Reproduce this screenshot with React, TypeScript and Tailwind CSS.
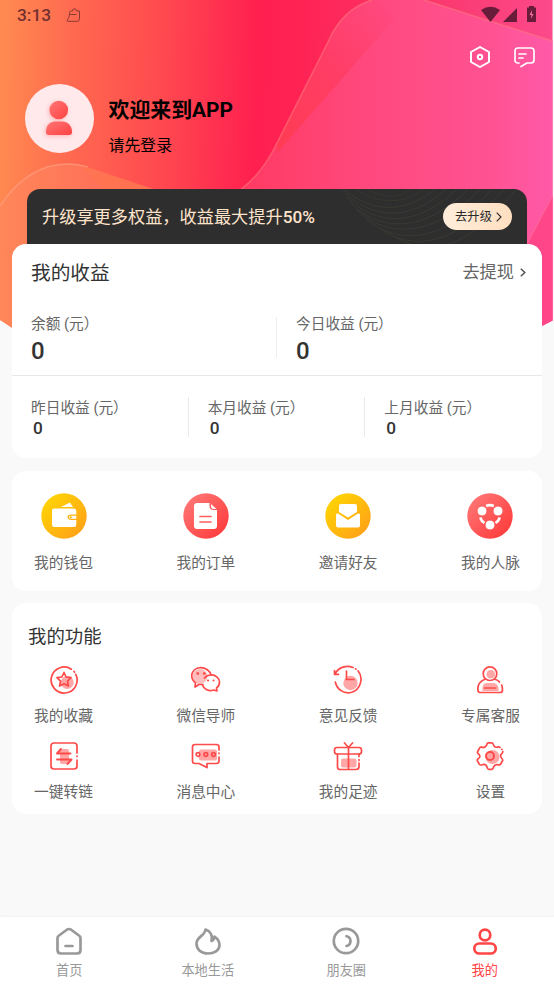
import React from "react";

const RED = "#ff4a4a";
const PINK = "#ffa6a6";

function Backdrop() {
  return (
    <svg className="absolute left-0 top-0 h-[340px] w-[553px]" viewBox="0 0 553 340" fill="none">
      <defs>
        <linearGradient id="base" x1="0" y1="130" x2="553" y2="145" gradientUnits="userSpaceOnUse">
          <stop offset="0" stopColor="#ff8a50" />
          <stop offset="0.12" stopColor="#ff6b50" />
          <stop offset="0.3" stopColor="#ff474f" />
          <stop offset="0.46" stopColor="#ff2050" />
          <stop offset="0.54" stopColor="#ff2354" />
          <stop offset="0.8" stopColor="#fa3a70" />
          <stop offset="1" stopColor="#fc4a8c" />
        </linearGradient>
        <linearGradient id="plate" x1="240" y1="0" x2="553" y2="0" gradientUnits="userSpaceOnUse">
          <stop offset="0" stopColor="#ff3a62" />
          <stop offset="0.45" stopColor="#ff4a80" />
          <stop offset="0.8" stopColor="#ff5292" />
          <stop offset="1" stopColor="#ff5aa8" />
        </linearGradient>
        <linearGradient id="facet" x1="270" y1="160" x2="385" y2="10" gradientUnits="userSpaceOnUse">
          <stop offset="0" stopColor="#ff3c50" />
          <stop offset="0.6" stopColor="#ff3c62" stopOpacity="0.8" />
          <stop offset="1" stopColor="#ff4274" stopOpacity="0.25" />
        </linearGradient>
        <linearGradient id="dune" x1="0" y1="0" x2="160" y2="0" gradientUnits="userSpaceOnUse">
          <stop offset="0" stopColor="#ff8759" />
          <stop offset="0.6" stopColor="#ff7259" />
          <stop offset="1" stopColor="#ff6354" />
        </linearGradient>
      </defs>
      <path d="M0 0H552.5V320.5Q276 470 0 320Z" fill="url(#base)" />
      <path d="M240 190Q262 174 277 143L328 42Q342 9 372 0H424L552.5 41V320.5L542 326H240Z" fill="url(#plate)" />
      <path d="M277 143L328 42Q342 9 372 0H376L395 18L277 153Z" fill="url(#facet)" />
      <path d="M240 190Q262 174 277 143L328 42Q342 9 372 0M424 0L552.5 41" stroke="#ff7a80" strokeOpacity="0.55" strokeWidth="1.5" />
      <path d="M552.5 196L524 250V335L552.5 320.5Z" fill="#ff4688" />
      <path d="M552.5 196L524 250" stroke="#ff7f9f" strokeOpacity="0.5" />
      <path d="M0 206Q28 164 68 164Q78 164 90 168L156 190V340H30L0 320Z" fill="url(#dune)" />
      <path d="M80 165.500L105 190H156L90 168Z" fill="#ff7450" fillOpacity="0.8" />
      <path d="M0 206Q28 164 68 164Q78 164 88 167" stroke="#ff9e80" strokeOpacity="0.75" strokeWidth="1.3" />
    </svg>
  );
}

function StatusBar() {
  return (
    <div className="flex h-[31px] items-center justify-between pl-[17px] pr-[17px] text-[#733030]">
      <div className="flex items-center">
        <span className="w-[34px] text-[17.3px] font-medium leading-[31px]">3:13</span>
        <svg className="ml-[15px]" width="15" height="15" viewBox="0 0 15 15" fill="none" stroke="#8b3a35" strokeWidth="1">
          <path d="M4.500 3H6.500Q6.500.8 8.500.8T10.500 3H13.500V10Q13.500 13.300 11.500 13.300H1.700Q.8 13.300 1.200 12.300Q3.500 9.500 3.500 6Q3.500 3 4.500 3ZM3.700 6.500H10.500" />
        </svg>
      </div>
      <svg className="-mt-[2px]" width="56" height="17" viewBox="0 0 56 17" fill="#681c3a">
        <path d="M0 4Q9.500-2.500 19 4L9.500 16Z" />
        <path d="M36 2V16H22Z" />
        <path d="M46 1.500H48V0H53V1.500H55V16H46Z" />
        <path d="M51 4L48.500 9H50.300L49.800 13L52.600 8H50.900Z" fill="#ed6995" />
      </svg>
    </div>
  );
}

function Header() {
  return (
    <header className="relative h-[189px]">
      <StatusBar />
      <div className="flex h-[52px] items-center justify-end gap-[24px] pr-[19px]">
        <svg width="20" height="22" viewBox="0 0 20 22" fill="none" stroke="white" strokeWidth="2" strokeLinejoin="round">
          <path d="M10 1L19 6V16L10 21L1 16V6Z" />
          <circle cx="10" cy="11" r="2.200" />
        </svg>
        <svg width="21" height="21" viewBox="0 0 21 21" fill="none" stroke="white" strokeWidth="1.700" strokeLinecap="round" strokeLinejoin="round">
          <path d="M5 16H4Q1 16 1 13V4Q1 1 4 1H17Q20 1 20 4V13Q20 16 17 16H13L7 19.500M5 7H12M5 11H9" />
        </svg>
      </div>
      <div className="flex items-start pl-[25px]">
        <div className="mt-[0.5px] flex h-[69px] w-[69px] items-center justify-center rounded-full bg-[#ffe9eb]">
          <svg className="-ml-[1.5px] -mt-[1px] drop-shadow-[-1px_1px_2px_#ffb3b3]" width="26" height="36" viewBox="0 0 26 36">
            <defs>
              <linearGradient id="person" x1="0" y1="0" x2="1" y2="1">
                <stop stopColor="#ff7676" /><stop offset="1" stopColor="#ff4141" />
              </linearGradient>
            </defs>
            <circle cx="12.800" cy="10" r="9.300" fill="url(#person)" />
            <path d="M0 32C0 24 5 21.500 10 21.500H16C22 21.500 26 26 26 32Q26 35 23 35H3Q0 35 0 32Z" fill="url(#person)" />
          </svg>
        </div>
        <div className="ml-[14.500px] text-black">
          <div className="mt-[12px] text-[20.900px] font-bold leading-[30px]">欢迎来到APP</div>
          <div className="mt-[9px] text-[15.900px] leading-[24px]">请先登录</div>
        </div>
      </div>
    </header>
  );
}

function UpgradeBanner() {
  return (
    <div className="relative mx-[27px] flex h-[54.500px] items-center overflow-hidden rounded-t-[13px] bg-[#2e2e2e] pl-[15px] pr-[15px]">
      <svg className="absolute left-[300px] top-0" width="200" height="55" viewBox="0 0 200 55" fill="none" stroke="#3c3b34" strokeWidth="0.900">
        <path d="M16 0C43 22 75 27 108 0M18 4C45 29 82 34 119 0M20 8C47 36 89 40 130 0M24 14C51 42 96 46 141 0M30 21C60 49 105 50 153 0M39 30C72 57 117 54 165 0M53 40C88 63 130 56 177 0M70 49C105 69 143 58 189 0" />
        <path d="M28 0C49 14 76 17 96 0M40 0C57 9 72 10 84 0" opacity="0.800" />
      </svg>
      <span className="relative mt-[2px] flex-1 text-[17.200px] font-normal leading-[24px] text-[#ffe4cc]">升级享更多权益，收益最大提升<span className="font-medium">50%</span></span>
      <button className="relative flex h-[27px] w-[69px] items-center justify-center gap-[4px] rounded-full bg-gradient-to-r from-[#ffedda] to-[#ffdfc1] pl-[2px] pt-px text-[12.300px] text-[#292929]">
        <span className="pt-px">去升级</span>
        <svg width="6" height="10" viewBox="0 0 6 10" fill="none" stroke="#292929" strokeWidth="1.100"><path d="M.7.7L5 5L.7 9.300" /></svg>
      </button>
    </div>
  );
}

function Earnings() {
  const small = ["昨日收益 (元）", "本月收益 (元）", "上月收益 (元）"];
  return (
    <section className="relative mx-[12px] h-[214.5px] rounded-[14px] bg-white text-[#333]">
      <div className="flex h-[58px] items-center justify-between pl-[19px] pr-[16px]">
        <h2 className="pt-[2px] text-[19.700px] font-normal">我的收益</h2>
        <div className="flex items-center gap-[6px] text-[17.200px] text-[#666]">
          <span className="pt-px">去提现</span>
          <svg width="6" height="9" viewBox="0 0 6 9" fill="none" stroke="#555" strokeWidth="1.500"><path d="M.8.7L4.800 4.500L.8 8.300" /></svg>
        </div>
      </div>
      <div className="flex h-[74.500px] border-b border-[#e8e8e8] pt-[11px]">
        {["余额 (元）", "今日收益 (元）"].map((label, i) => (
          <div key={label} className="relative flex-1 pl-[19px]">
            <div className="text-[14.700px] leading-[22px] text-[#666]">{label}</div>
            <div className="text-[24px] font-medium leading-[32px]">0</div>
            {i === 0 && <i className="absolute right-0 top-[4px] h-[41px] w-px bg-[#eee]" />}
          </div>
        ))}
      </div>
      <div className="flex pt-[21px]">
        {small.map((label, i) => (
          <div key={label} className="relative flex-1 pl-[19px]">
            <div className="text-[14.700px] leading-[22px] text-[#666]">{label}</div>
            <div className="-mt-px pl-[2px] text-[17.200px] font-medium leading-[20px]">0</div>
            {i < 2 && <i className="absolute right-0 top-0 h-[40px] w-px bg-[#eaeaea]" />}
          </div>
        ))}
      </div>
    </section>
  );
}

function Disc({ tone, children }: { tone: "gold" | "red"; children: React.ReactNode }) {
  const id = React.useId();
  return (
    <svg width="46" height="46" viewBox="0 0 46 46">
      <defs>
        <linearGradient id={id} x1="0" y1="0" x2="1" y2="1">
          <stop stopColor={tone === "gold" ? "#ffdb00" : "#ff7c7c"} />
          <stop offset="1" stopColor={tone === "gold" ? "#ff9b1b" : "#ff3535"} />
        </linearGradient>
      </defs>
      <circle cx="23" cy="23" r="22.700" fill={`url(#${id})`} />
      {children}
    </svg>
  );
}

const shortcuts = [
  {
    label: "我的钱包",
    icon: (
      <Disc tone="gold">
        <path d="M20 14L28 10Q29 9.500 29.600 10.500L32 14Z" fill="white" />
        <path d="M13 15.500H33Q35.300 15.500 35.300 18V21.500H30Q26.500 21.500 26.500 24T30 27H35.300V31.500Q35.300 34 33 34H13Q11 34 11 32V17.500Q11 15.500 13 15.500Z" fill="white" />
        <path d="M35.300 22.700H30Q28 22.700 28 24.200T30 25.800H35.300Z" fill="white" />
        <circle cx="29.900" cy="24.200" r="1" fill="#ffaf10" />
      </Disc>
    ),
  },
  {
    label: "我的订单",
    icon: (
      <Disc tone="red">
        <path d="M14 10H26.500V13Q26.500 17 30.500 17H34V33Q34 36 31 36H14Q11 36 11 33V13Q11 10 14 10Z" fill="white" />
        <path d="M28 11L33.500 16H30.500Q28 16 28 13Z" fill="white" />
        <path d="M17 23.500H28M17 29H28" stroke="#ff6060" strokeWidth="1.700" strokeLinecap="round" />
      </Disc>
    ),
  },
  {
    label: "邀请好友",
    icon: (
      <Disc tone="gold">
        <path d="M14 13Q14 11 16 11H30Q32 11 32 13V19L23 24.500L14 19Z" fill="white" />
        <path d="M13 20.500L23 27L33 20.500Q35 20 35 22V32.500Q35 34.500 33 34.500H13Q11 34.500 11 32.500V22Q11 20 13 20.500Z" fill="white" />
      </Disc>
    ),
  },
  {
    label: "我的人脉",
    icon: (
      <Disc tone="red">
        <path d="M19.200 13Q23 11.200 26.800 13M32.800 24.500Q31.700 28 28.500 30M17.500 30Q14.300 28 13.200 24.500" fill="none" stroke="white" strokeWidth="2.600" />
        <circle cx="15" cy="18" r="5" fill="white" stroke="#ff5c5c" /><circle cx="31" cy="18" r="5" fill="white" stroke="#ff5c5c" /><circle cx="23" cy="32" r="5" fill="white" stroke="#ff5050" />
      </Disc>
    ),
  },
];

function LineIcon({ children }: { children: React.ReactNode }) {
  return (
    <svg width="30" height="30" viewBox="0 0 30 30" fill="none" stroke={RED} strokeWidth="1.700" strokeLinecap="round" strokeLinejoin="round">
      {children}
    </svg>
  );
}

const features = [
  {
    label: "我的收藏",
    icon: (
      <LineIcon>
        <circle cx="18.200" cy="17.500" r="6.500" fill={PINK} stroke="none" />
        <path d="M22.300 4.200A13 13 0 1 0 26.800 9.300M25 6.500L25.500 7.100" />
        <path d="M15 7.500L17.100 12L22 12.700L18.500 16.100L19.400 21L15 18.700L10.600 21L11.500 16.100L8 12.700L12.900 12Z" />
      </LineIcon>
    ),
  },
  {
    label: "微信导师",
    icon: (
      <LineIcon>
        <circle cx="9" cy="11.500" r="7.500" fill="#ffbdbd" stroke="none" />
        <path d="M12 19.500H8L4 22L4.500 18C1 15.500-.2 11 1.500 7.500C4.500 1.500 12 1.800 16 4.500Q19.500 7 20 10C24 9.500 28.500 13 28.500 17C28.500 20 27 22 25.500 23L26 26L22.500 25C18 27 12.500 24 11.500 20" />
        <path d="M6.500 8.500H7M13 8.500H13.500" strokeWidth="2.500" />
        <path d="M17 15.500H17.100M22.500 15.500H22.600" strokeWidth="2" />
        <path d="M20 10Q16 10 13.500 13" />
      </LineIcon>
    ),
  },
  {
    label: "意见反馈",
    icon: (
      <LineIcon>
        <circle cx="17.500" cy="18" r="7.200" fill={PINK} stroke="none" />
        <path d="M1.500 5.500V9.300H5.500M2 9C5.500 1.500 14 .2 20 2.500M25 5.800C31 13 27.500 25.500 18 27.500C10.500 29 4 24.500 2.300 17M22.500 3.800L23 4.200M13.500 6V14.500H21" />
      </LineIcon>
    ),
  },
  {
    label: "专属客服",
    icon: (
      <LineIcon>
        <circle cx="15.800" cy="9.300" r="4.300" fill={PINK} stroke="none" />
        <path d="M7.500 23C8 18.500 10 18 12 18H18C21.500 18 23 20.500 23.500 23V26H7.500Z" fill={PINK} stroke="none" />
        <circle cx="15" cy="8.700" r="6.800" />
        <path d="M10 14.200C5.500 16 2.800 19.500 2.800 24Q2.800 27.500 5 27.500H25Q27.500 27.500 27.500 25Q27.500 22 26.700 20M20 14.200Q23 15 24.500 17M9.500 23H20.500" />
      </LineIcon>
    ),
  },
  {
    label: "一键转链",
    icon: (
      <LineIcon>
        <rect x="11" y="8" width="9" height="15" rx="2" fill={PINK} stroke="none" />
        <path d="M28 12V5Q28 2 25 2H5Q2 2 2 5V25Q2 28 5 28H25Q28 28 28 25V19M28 15V15.500" />
        <path d="M8 12.500H21.500M12 8L8 12.500M8 18.500H22.500M22.500 18.500L18.500 23" strokeWidth="1.900" />
      </LineIcon>
    ),
  },
  {
    label: "消息中心",
    icon: (
      <LineIcon>
        <rect x="8" y="8.500" width="18" height="11" rx="2" fill={PINK} stroke="none" />
        <path d="M28 9V6Q28 3.500 25.500 3.500H4Q1.500 3.500 1.500 6V20Q1.500 22.500 4 22.500H8L16 26.500V22.500H25.500Q28 22.500 28 20V16M28 12V12.500" />
        <circle cx="7" cy="13.500" r="1.800" /><circle cx="14.800" cy="13.500" r="1.800" /><circle cx="22.500" cy="13.500" r="1.800" />
      </LineIcon>
    ),
  },
  {
    label: "我的足迹",
    icon: (
      <LineIcon>
        <rect x="8" y="17.500" width="15.500" height="9" rx="2" fill={PINK} stroke="none" />
        <path d="M26 13V15.500M26 22V25.500Q26 28.500 23 28.500H7Q4.500 28.500 4.500 26V13M26 18.500V19.500M15.500 6.500V28.500M11.500 2L15.500 6.500L19.500 2" />
        <path d="M4 6.500H26Q28.500 6.500 28.500 9V10.500Q28.500 13 26 13H4Q1.500 13 1.500 10.500V9Q1.500 6.500 4 6.500Z" />
      </LineIcon>
    ),
  },
  {
    label: "设置",
    icon: (
      <LineIcon>
        <circle cx="17.500" cy="16" r="7" fill={PINK} stroke="none" />
        <circle cx="15" cy="15" r="4" strokeWidth="2" />
        <path d="M25 6.500L23.500 5.800Q20.500 7 19 5Q17.800 2 17 1.800H13Q12 2 11.500 4.500Q9.500 7.500 6.500 6Q5 5.700 4 8L2.500 11Q2 12 4 13.500Q6 16 3.500 17.500Q1.700 18.500 2.500 20L4.500 23.500Q5.500 24.500 8 23.500Q11 23 12 26Q12.500 28.300 13.500 28.300H17Q18.300 28 18.500 26Q20 23 23 23.800Q25 24.200 25.700 23L27.700 19.500Q28 18.500 26.500 17Q24.500 14.500 26.500 13Q28 11.500 27.800 10.500M26.800 8.300L27 8.500" />
      </LineIcon>
    ),
  },
];

function Tile({ icon, label }: { icon: React.ReactNode; label: string }) {
  return (
    <div className="flex w-[59px] flex-col items-center whitespace-nowrap text-[14.700px] leading-[22px] text-[#666]">
      {icon}
      <span>{label}</span>
    </div>
  );
}

const tabs = [
  {
    label: "首页",
    icon: <path d="M13.200 2.500Q15 1.500 16.800 2.500L25 8.500Q26.500 9.500 26.500 11V23Q26.500 26.500 23 26.500H7Q3.500 26.500 3.500 23V11Q3.500 9.500 5 8.500ZM11.500 19H18.500" />,
  },
  {
    label: "本地生活",
    icon: <path d="M12.500 2.500C17 4 20 8 18.500 14C20.500 13 21.500 11 21.500 9.500C25 12 26.500 15 26.500 18C26.500 23.500 21 26.500 15 26.500C8 26.500 3.500 22.500 3.500 16.500C3.500 9.500 12 9 12.500 2.500Z" />,
  },
  {
    label: "朋友圈",
    icon: <><circle cx="15" cy="14" r="12.200" /><path d="M15.500 9.200A5 5 0 0 1 15.500 19" /></>,
  },
  {
    label: "我的",
    icon: <><circle cx="15" cy="8" r="5.300" /><rect x="4.300" y="16.500" width="21.500" height="10" rx="5" /></>,
  },
];

function TabBar() {
  return (
    <nav className="relative mt-auto flex h-[67px] bg-white shadow-[0_-1px_2px_rgba(0,0,0,0.04)]">
      {tabs.map((tab, i) => (
        <div key={tab.label} className={`flex flex-1 flex-col items-center pt-[10px] text-[13.200px] leading-[20px] ${i === 3 ? "text-[#ff4646]" : "text-[#999]"}`}>
          <svg width="30" height="29" viewBox="0 0 30 29" fill="none" stroke="currentColor" strokeWidth="2.700" strokeLinecap="round" strokeLinejoin="round">
            {tab.icon}
          </svg>
          <span className="mt-[5px]">{tab.label}</span>
        </div>
      ))}
    </nav>
  );
}

export default function App() {
  return (
    <main className="relative flex h-[984px] w-[554px] flex-col overflow-hidden bg-[#f9f9f9] font-['Roboto','Noto_Sans_CJK_SC',sans-serif]">
      <Backdrop />
      <Header />
      <UpgradeBanner />
      <Earnings />
      <section className="relative mx-[12px] mt-[13px] flex h-[120px] justify-between rounded-[14px] bg-white px-[22px] pt-[22px]">
        {shortcuts.map((s) => (
          <Tile key={s.label} label={s.label} icon={<div className="mb-[13px]">{s.icon}</div>} />
        ))}
      </section>
      <section className="relative mx-[12px] mt-[12px] h-[211px] rounded-[14px] bg-white">
        <h2 className="pl-[16px] pt-[19px] text-[18.400px] leading-[30px] text-[#333]">我的功能</h2>
        <div className="mt-[13px] grid grid-cols-[repeat(4,59px)] justify-between gap-y-[14px] px-[22px]">
          {features.map((f) => (
            <Tile key={f.label} label={f.label} icon={<div className="mb-[10px] h-[30px]">{f.icon}</div>} />
          ))}
        </div>
      </section>
      <TabBar />
    </main>
  );
}
